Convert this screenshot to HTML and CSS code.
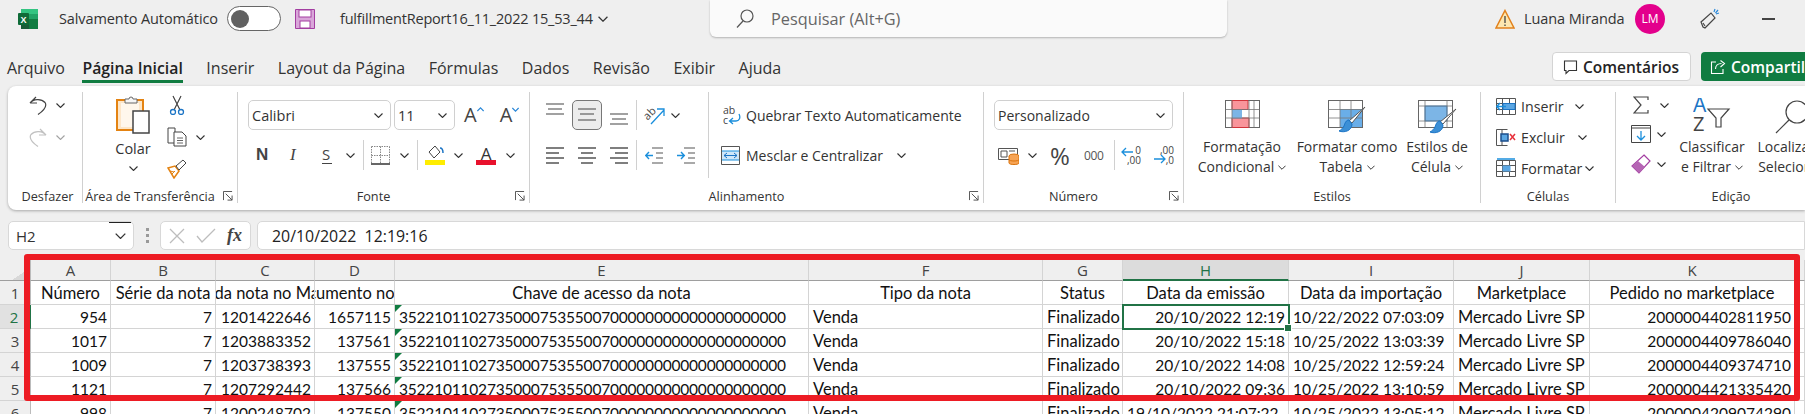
FILE: index.html
```html
<!DOCTYPE html>
<html lang="pt-BR">
<head>
    <meta charset="UTF-8">
    <meta name="viewport" content="width=device-width, initial-scale=1.0">
    <title>fulfillmentReport16_11_2022 15_53_44</title>
    <link rel="stylesheet" href="styles.css">
</head>
<body>
    <svg class="sprite" aria-hidden="true">
        <symbol id="chev" viewBox="0 0 9 5"><path d="M.5.5 4.500 4.500 8.500.5" fill="none" stroke="#333" stroke-width="1.100"/></symbol>
        <symbol id="launcher" viewBox="0 0 11 11"><path d="M.5 10V.5H10M3 3l7 7M10 5v5H5" fill="none" stroke="#555" stroke-width="1.100"/></symbol>
        <symbol id="lines-top" viewBox="0 0 18 12"><path d="M0 1h18M2 6h14M0 11h18" stroke="#444" stroke-width="1.200"/></symbol>
        <symbol id="lines-center" viewBox="0 0 18 14"><path d="M0 1h18M2 6h14M0 12h18" stroke="#444" stroke-width="1.200"/></symbol>
        <symbol id="align-left" viewBox="0 0 18 17"><path d="M0 1h18M0 6h13M0 11h18M0 16h13" stroke="#555" stroke-width="1.300"/></symbol>
        <symbol id="align-center" viewBox="0 0 18 17"><path d="M0 1h18M3 6h12M0 11h18M3 16h12" stroke="#555" stroke-width="1.300"/></symbol>
        <symbol id="align-right" viewBox="0 0 18 17"><path d="M0 1h18M5 6h13M0 11h18M5 16h13" stroke="#555" stroke-width="1.300"/></symbol>
        <symbol id="grid-frame" viewBox="0 0 20 20"><path d="M.5 2.500h19v16H.5zM.5 7.500h19M.5 13.500h19M6.500 2.500v16M13.500 2.500v16" fill="none" stroke="#555"/></symbol>
    </svg>

    <header class="title-bar">
        <svg class="logo" width="20" height="20" viewBox="0 0 20 20">
            <rect x="3" width="17" height="20" rx="1.500" fill="#21a366"/>
            <rect x="3" width="17" height="5" fill="#33c481"/>
            <rect x="11" y="10" width="9" height="10" fill="#107c41"/>
            <rect x="3" y="10" width="8" height="10" fill="#185c37"/>
            <rect y="4" width="11" height="12" rx="1" fill="#0f6b38"/>
            <text x="2.500" y="13.500" class="logo-x">X</text>
        </svg>
        <span class="title-text autosave">Salvamento Automático</span>
        <span class="toggle"><span class="knob"></span></span>
        <svg class="save" width="20" height="20" viewBox="0 0 20 20">
            <path d="M.5.5h19v19H.5z" fill="#d9a6d9" stroke="#a33ea1"/>
            <rect x="4" y="1" width="12" height="7" fill="#fff" stroke="#a33ea1"/>
            <rect x="5" y="12" width="10" height="7" fill="#fff" stroke="#a33ea1"/>
        </svg>
        <span class="title-text filename">fulfillmentReport16_11_2022 15_53_44</span>
        <svg class="chev file-chev" width="10" height="6"><use href="#chev"/></svg>
        <div class="search">
            <svg width="18" height="20" viewBox="0 0 18 20"><circle cx="11" cy="7" r="6" fill="none" stroke="#555" stroke-width="1.200"/><path d="M7 12 1 18.500" stroke="#555" stroke-width="1.200"/></svg>
            <span>Pesquisar (Alt+G)</span>
        </div>
        <svg class="warn" width="20" height="20" viewBox="0 0 20 20"><path d="M10 1.500 19 19H1z" fill="#fde7b0" stroke="#e2811c" stroke-width="1.500"/><path d="M10 7v7M10 15.500v1.500" stroke="#444" stroke-width="1.300"/></svg>
        <span class="title-text user">Luana Miranda</span>
        <span class="avatar">LM</span>
        <svg class="mega" width="21" height="22" viewBox="0 0 21 22"><path d="M2 14 12 5l4 5-8 8-2 2-2-1zM6 18l-2-3" fill="none" stroke="#444" stroke-width="1.200"/><path d="M15 4l1-3M17 6l3-1M16.500 5 19 2" stroke="#2b88d8" stroke-width="1.200"/></svg>
        <span class="minimize"></span>
    </header>

    <nav class="tabs">
        <span class="tab first">Arquivo</span>
        <span class="tab active">Página Inicial</span>
        <span class="tab">Inserir</span>
        <span class="tab">Layout da Página</span>
        <span class="tab">Fórmulas</span>
        <span class="tab">Dados</span>
        <span class="tab">Revisão</span>
        <span class="tab">Exibir</span>
        <span class="tab">Ajuda</span>
        <div class="tab-actions">
            <button class="btn-comments">
                <svg width="16" height="16" viewBox="0 0 16 16"><path d="M2.500 2h12v9.500H7L4 14.500v-3H2.500z" fill="none" stroke="#333" stroke-width="1.100"/></svg>
                Comentários
            </button>
            <button class="btn-share">
                <svg width="16" height="16" viewBox="0 0 16 16"><path d="M6 3H1.500v11.500h11.500V10M5.500 10c0-3.500 2.500-5.500 6-5.500M10.500 1.500l4 3-4 3.500" fill="none" stroke="#fff" stroke-width="1.100"/></svg>
                Compartilhar
            </button>
        </div>
    </nav>

    <section class="ribbon">
        <div class="group g-undo">
            <div class="group-body undo-body">
                <div class="row">
                    <svg width="18" height="20" viewBox="0 0 18 20"><path d="M1 8 7 2M1 8h7M1 8c3-4 11-5 15-.500 2 3 0 7-7 12" fill="none" stroke="#444" stroke-width="1.200"/></svg>
                    <svg class="chev m9" width="9" height="5"><use href="#chev"/></svg>
                </div>
                <div class="row faded">
                    <svg width="18" height="20" viewBox="0 0 18 20"><path d="M17 8l-6-6M17 8h-7M17 8C14 4 6 3 2 7.500c-2 3 0 7 7 12" fill="none" stroke="#777" stroke-width="1.200"/></svg>
                    <svg class="chev m9" width="9" height="5"><use href="#chev"/></svg>
                </div>
            </div>
            <div class="group-label"><span>Desfazer</span></div>
        </div>

        <div class="group g-clip">
            <div class="group-body clip-body">
                <div class="paste">
                    <svg width="34" height="38" viewBox="0 0 34 38">
                        <path d="M1 4h26v30H1z" fill="#fde6c8" stroke="#e48312" stroke-width="2"/>
                        <path d="M5 7h18v24H5z" fill="#fff7ec"/>
                        <path d="M9 7V3h4a2 2 0 0 1 4 0h4v4z" fill="#f6f6f6" stroke="#666"/>
                        <rect x="17" y="15" width="16" height="22" fill="#fff" stroke="#444" stroke-width="1.500"/>
                    </svg>
                    <span class="paste-label">Colar</span>
                    <svg class="chev" width="9" height="5"><use href="#chev"/></svg>
                </div>
                <div class="clip-col">
                    <div class="row">
                        <svg width="20" height="20" viewBox="0 0 20 20"><path d="M6 1l7 14M14 1 7 15" fill="none" stroke="#444" stroke-width="1.200"/><circle cx="6" cy="17" r="2.500" fill="none" stroke="#1b74c5" stroke-width="1.300"/><circle cx="14" cy="17" r="2.500" fill="none" stroke="#1b74c5" stroke-width="1.300"/></svg>
                    </div>
                    <div class="row">
                        <svg width="20" height="20" viewBox="0 0 20 20"><path d="M1 1h7v15H1z" fill="#fff" stroke="#444"/><path d="M7 5h8l4 4v10H7z" fill="#fff" stroke="#444"/><path d="M10 11h6M10 13.500h6M10 16h6" stroke="#666"/></svg>
                        <svg class="chev m9" width="9" height="5"><use href="#chev"/></svg>
                    </div>
                    <div class="row">
                        <svg width="20" height="20" viewBox="0 0 20 20"><path d="M1 9l7-2 4 5-5 7z" fill="#fff" stroke="#e48312" stroke-width="1.500"/><path d="M3 12l4 1M5 15l3-3" stroke="#e48312"/><path d="M9 7l3 4 7-7-3-3z" fill="#fff" stroke="#444"/></svg>
                    </div>
                </div>
            </div>
            <div class="group-label has-launcher"><span>Área de Transferência</span><svg width="10" height="10"><use href="#launcher"/></svg></div>
        </div>

        <div class="group g-font">
            <div class="group-body stacked">
                <div class="row row-30 pad-10">
                    <div class="select font-name"><span>Calibri</span><svg class="chev" width="9" height="5"><use href="#chev"/></svg></div>
                    <div class="select font-size m3"><span>11</span><svg class="chev" width="9" height="5"><use href="#chev"/></svg></div>
                    <span class="grow m9">A<svg width="7" height="5" viewBox="0 0 9 5"><path d="M.5 4.500 4.500.5 8.500 4.500" fill="none" stroke="#2b88d8" stroke-width="1.500"/></svg></span>
                    <span class="shrink m16">A<svg width="7" height="5" viewBox="0 0 9 5"><path d="M.5.5 4.500 4.500 8.500.5" fill="none" stroke="#2b88d8" stroke-width="1.500"/></svg></span>
                </div>
                <div class="row row-30">
                    <span class="fmt fmt-bold m18">N</span>
                    <span class="fmt fmt-italic m21">I</span>
                    <span class="fmt fmt-under m24">S</span>
                    <svg class="chev m14" width="9" height="5"><use href="#chev"/></svg>
                    <span class="vsep m8"></span>
                    <svg class="m7" width="19" height="19" viewBox="0 0 19 19"><path d="M.5.5h18M.5 9.500h18M9.500.5v17M.5.5v17M18.500.5v17" fill="none" stroke="#888" stroke-dasharray="1.500 1"/><path d="M0 18h19" stroke="#333" stroke-width="1.500"/></svg>
                    <svg class="chev m10" width="9" height="5"><use href="#chev"/></svg>
                    <span class="vsep m8"></span>
                    <svg class="m7" width="20" height="20" viewBox="0 0 20 20"><path d="M4 7 10 1l5 6-6 6z" fill="#fff" stroke="#444"/><path d="M15 3c2 0 3 2 3 5" fill="none" stroke="#1b74c5" stroke-width="1.500"/><rect y="15" width="20" height="5" fill="#ffed00"/></svg>
                    <svg class="chev m9" width="9" height="5"><use href="#chev"/></svg>
                    <span class="font-color m13">A</span>
                    <svg class="chev m10" width="9" height="5"><use href="#chev"/></svg>
                </div>
            </div>
            <div class="group-label has-launcher"><span>Fonte</span><svg width="10" height="10"><use href="#launcher"/></svg></div>
        </div>

        <div class="group g-align">
            <div class="group-body align-body">
                <div class="align-left stacked">
                    <div class="row row-30">
                        <svg class="m16 up-6" width="18" height="12"><use href="#lines-top"/></svg>
                        <span class="active-btn m8"><svg width="18" height="14"><use href="#lines-center"/></svg></span>
                        <svg class="m8 down-8" width="18" height="12"><use href="#lines-top"/></svg>
                        <span class="vsep m8"></span>
                        <svg class="m7" width="21" height="20" viewBox="0 0 21 20"><text x="0" y="13" class="orient" transform="rotate(-45 5 10)">ab</text><path d="M7 19 20 5M13 4h7v7" fill="none" stroke="#1b8fdc" stroke-width="1.300"/></svg>
                        <svg class="chev m6" width="9" height="5"><use href="#chev"/></svg>
                    </div>
                    <div class="row row-30">
                        <svg class="m16" width="18" height="17"><use href="#align-left"/></svg>
                        <svg class="m14" width="18" height="17"><use href="#align-center"/></svg>
                        <svg class="m14" width="18" height="17"><use href="#align-right"/></svg>
                        <span class="vsep m8"></span>
                        <svg class="m8" width="18" height="17" viewBox="0 0 18 17"><path d="M7 1h11M11 6h7M11 11h7M7 16h11" fill="none" stroke="#555" stroke-width="1.200"/><path d="M8 8.500H1M4 5 .7 8.500 4 12" fill="none" stroke="#1b8fdc" stroke-width="1.400"/></svg>
                        <svg class="m14" width="18" height="17" viewBox="0 0 18 17"><path d="M7 1h11M11 6h7M11 11h7M7 16h11" fill="none" stroke="#555" stroke-width="1.200"/><path d="M0 8.500h7M4 5l3.300 3.500L4 12" fill="none" stroke="#1b8fdc" stroke-width="1.400"/></svg>
                    </div>
                </div>
                <div class="align-right stacked">
                    <div class="row row-30 pad-14">
                        <svg width="18" height="20" viewBox="0 0 18 20"><text x="0" y="9" class="mini">ab</text><text x="0" y="19" class="mini">c</text><path d="M16 9c2 4 0 7-3 7H7M10 13l-3.500 3 3.500 3" fill="none" stroke="#1b8fdc" stroke-width="1.300"/></svg>
                        <span class="label m5">Quebrar Texto Automaticamente</span>
                    </div>
                    <div class="row row-30 pad-12">
                        <svg width="19" height="19" viewBox="0 0 19 19"><path d="M.5.5h18v18H.5z" fill="#fff" stroke="#555"/><rect x="1" y="5" width="17" height="9" fill="#cfe6f8"/><path d="M1 5h17M1 14h17" stroke="#1b8fdc"/><path d="M3 9.500h13M6 7 3 9.500 6 12M13 7l3 2.500L13 12" fill="none" stroke="#1b74c5"/></svg>
                        <span class="label m6">Mesclar e Centralizar</span>
                        <svg class="chev m14" width="9" height="5"><use href="#chev"/></svg>
                    </div>
                </div>
            </div>
            <div class="group-label has-launcher"><span>Alinhamento</span><svg width="10" height="10"><use href="#launcher"/></svg></div>
        </div>

        <div class="group g-number">
            <div class="group-body stacked">
                <div class="row row-30 pad-10">
                    <div class="select number-format"><span>Personalizado</span><svg class="chev" width="9" height="5"><use href="#chev"/></svg></div>
                </div>
                <div class="row row-30">
                    <svg class="m14" width="21" height="20" viewBox="0 0 21 20"><path d="M.5 3.500h19v11H.5z" fill="#fff" stroke="#555"/><path d="M3 6h6v6H3zM11 6h6" fill="none" stroke="#555"/><ellipse cx="16" cy="11" rx="5" ry="2" fill="#f7a455" stroke="#d9730d"/><path d="M11 11v7c0 2 10 2 10 0v-7" fill="#f7a455" stroke="#d9730d"/><path d="M11 14.500c0 2 10 2 10 0" fill="none" stroke="#d9730d"/></svg>
                    <svg class="chev m9" width="9" height="5"><use href="#chev"/></svg>
                    <span class="percent m13">%</span>
                    <span class="thousands m12">000</span>
                    <span class="vsep m8"></span>
                    <span class="decimals m6"><svg width="12" height="18" viewBox="0 0 12 18"><path d="M12 6H1M5 2 1 6l4 4" fill="none" stroke="#1b8fdc" stroke-width="1.300"/></svg><span class="dec-nums"><i>0</i><i>,00</i></span></span>
                    <span class="decimals m14"><svg width="12" height="18" viewBox="0 0 12 18"><path d="M0 13h11M7 9l4 4-4 4" fill="none" stroke="#1b8fdc" stroke-width="1.300"/></svg><span class="dec-nums"><i>,00</i><i>,0</i></span></span>
                </div>
            </div>
            <div class="group-label has-launcher"><span>Número</span><svg width="10" height="10"><use href="#launcher"/></svg></div>
        </div>

        <div class="group g-styles">
            <div class="group-body styles-body">
                <div class="big-btn w100">
                    <div class="big-icon">
                        <svg width="35" height="28" viewBox="0 0 35 28">
                            <rect x=".5" y=".5" width="34" height="27" fill="#fff" stroke="#666"/>
                            <path d="M7 .5h16v9H7zM7 18h17v9.500H7z" fill="#f9959b" stroke="#d1343b"/>
                            <rect x="7" y="9.500" width="10" height="9" fill="#7cb5e6"/>
                            <path d="M.5 9.500h34M.5 18h34M7 .5v27M24 .5v27M29 .5v27" fill="none" stroke="#777" stroke-width=".8"/>
                        </svg>
                    </div>
                    <span>Formatação</span>
                    <span>Condicional <svg class="chev" width="8" height="5"><use href="#chev"/></svg></span>
                </div>
                <div class="big-btn w110">
                    <div class="big-icon">
                        <svg width="38" height="34" viewBox="0 0 38 34">
                            <rect x=".5" y=".5" width="34" height="27" fill="#fff" stroke="#666"/>
                            <rect x="12" y="9" width="22" height="18" fill="#6aaee8"/>
                            <path d="M.5 9.500h34M.5 18h34M12 .5v27M23 .5v27" fill="none" stroke="#777" stroke-width=".8"/>
                            <path d="M37 7 24 23l-3-2z" fill="#fff" stroke="#555"/>
                            <path d="M21 20c-3 0-4 3-5 6-1 2-3 4-5 5 5 2 13 0 13-7z" fill="#3b8fd6" stroke="#1b74c5"/>
                        </svg>
                    </div>
                    <span>Formatar como</span>
                    <span>Tabela <svg class="chev" width="8" height="5"><use href="#chev"/></svg></span>
                </div>
                <div class="big-btn w70">
                    <div class="big-icon">
                        <svg width="39" height="35" viewBox="0 0 39 35">
                            <rect x=".5" y=".5" width="34" height="27" fill="#fff" stroke="#666"/>
                            <rect x="7" y="6" width="22" height="15" fill="#7cb5e6" stroke="#1b74c5" stroke-width=".8"/>
                            <path d="M.5 6h34M.5 21h34M7 .5v27M29 .5v27" fill="none" stroke="#777" stroke-width=".8"/>
                            <path d="M38 9 25 24l-3-2z" fill="#fff" stroke="#555"/>
                            <path d="M22 21c-3 0-4 3-5 6-1 2-3 4-5 5 5 2 13 0 13-7z" fill="#3b8fd6" stroke="#1b74c5"/>
                        </svg>
                    </div>
                    <span>Estilos de</span>
                    <span>Célula <svg class="chev" width="8" height="5"><use href="#chev"/></svg></span>
                </div>
            </div>
            <div class="group-label"><span>Estilos</span></div>
        </div>

        <div class="group g-cells">
            <div class="group-body cells-body">
                <div class="row">
                    <svg width="20" height="20" viewBox="0 0 20 20"><use href="#grid-frame"/><rect x="7" y="7.500" width="12" height="6" fill="#5ba6e2" stroke="#1b74c5"/><path d="M10 10.500H1M4 7 .8 10.500 4 14" fill="none" stroke="#1b8fdc" stroke-width="1.400"/></svg>
                    <span class="label cell-label">Inserir</span>
                    <svg class="chev" width="9" height="5"><use href="#chev"/></svg>
                </div>
                <div class="row">
                    <svg width="20" height="20" viewBox="0 0 20 20"><path d="M.5 2.500h11M.5 18.500h11M.5 2.500v16M6 2.500v5M6 13.500v5" fill="none" stroke="#555"/><rect x="5" y="7" width="7" height="7" fill="#5ba6e2" stroke="#1b4e8c" stroke-width="1.500"/><path d="M14 7l5 6M19 7l-5 6" stroke="#e8303a" stroke-width="1.500"/></svg>
                    <span class="label cell-label mid">Excluir</span>
                    <svg class="chev" width="9" height="5"><use href="#chev"/></svg>
                </div>
                <div class="row">
                    <svg width="20" height="20" viewBox="0 0 20 20"><use href="#grid-frame"/><rect x="6.500" y="7.500" width="8" height="6" fill="#5ba6e2"/><path d="M1 1h18" stroke="#1b8fdc" stroke-width="1.300"/></svg>
                    <span class="label cell-label wide">Formatar</span>
                    <svg class="chev" width="9" height="5"><use href="#chev"/></svg>
                </div>
            </div>
            <div class="group-label"><span>Células</span></div>
        </div>

        <div class="group g-edit">
            <div class="group-body edit-body">
                <div class="edit-col">
                    <div class="row">
                        <svg class="m2" width="16" height="18" viewBox="0 0 16 18"><path d="M15 4V1H1l7 8-7 8h14v-3" fill="none" stroke="#444" stroke-width="1.200"/></svg>
                        <svg class="chev m11" width="9" height="5"><use href="#chev"/></svg>
                    </div>
                    <div class="row">
                        <svg width="20" height="18" viewBox="0 0 20 18"><path d="M.5.5h19v17H.5z" fill="#fff" stroke="#444"/><path d="M1 3h18" stroke="#444"/><path d="M10 6v9M6 11l4 4 4-4" fill="none" stroke="#1b8fdc" stroke-width="1.300"/></svg>
                        <svg class="chev m6" width="9" height="5"><use href="#chev"/></svg>
                    </div>
                    <div class="row">
                        <svg width="20" height="20" viewBox="0 0 20 20"><path d="M13 1l6 6-11 12-7-7z" fill="#fff" stroke="#a33ea1" stroke-width="1.200"/><path d="M7 7l7 6-6 6-7-7z" fill="#b565b4"/></svg>
                        <svg class="chev m6" width="9" height="5"><use href="#chev"/></svg>
                    </div>
                </div>
                <div class="big-btn w70">
                    <div class="big-icon sort-icon">
                        <svg width="38" height="34" viewBox="0 0 38 34">
                            <text x="0" y="14" class="sort-a">A</text>
                            <text x="0" y="33" class="sort-z">Z</text>
                            <path d="M15 11h21l-8 9v9h-5v-9z" fill="#fff" stroke="#444" stroke-width="1.200"/>
                        </svg>
                    </div>
                    <span>Classificar</span>
                    <span>e Filtrar <svg class="chev" width="8" height="5"><use href="#chev"/></svg></span>
                </div>
                <div class="big-btn w74">
                    <div class="big-icon">
                        <svg width="34" height="34" viewBox="0 0 34 34"><circle cx="22" cy="12" r="11" fill="#fff" stroke="#444" stroke-width="1.200"/><path d="M14 20 1 33" stroke="#444" stroke-width="1.200"/></svg>
                    </div>
                    <span>Localizar e</span>
                    <span>Selecionar</span>
                </div>
            </div>
            <div class="group-label"><span>Edição</span></div>
        </div>
    </section>

    <div class="formula-bar">
        <div class="name-box"><span>H2</span><span class="name-arrow"><svg class="chev" width="11" height="6"><use href="#chev"/></svg></span></div>
        <span class="dots"><i></i><i></i><i></i></span>
        <div class="fx-box">
            <svg width="16" height="16" viewBox="0 0 16 16"><path d="M1 1l14 14M15 1 1 15" stroke="#bdbdbd" stroke-width="1.300"/></svg>
            <svg width="20" height="15" viewBox="0 0 20 15"><path d="M1 8l5 6L19 1" fill="none" stroke="#bdbdbd" stroke-width="1.300"/></svg>
            <span class="fx">fx</span>
        </div>
        <div class="formula-input">20/10/2022&nbsp; 12:19:16</div>
    </div>

    <div class="sheet-wrap">
        <div class="sheet">
            <div class="corner"></div>
            <div class="col-head">A</div><div class="col-head">B</div><div class="col-head">C</div><div class="col-head">D</div><div class="col-head">E</div><div class="col-head">F</div><div class="col-head">G</div><div class="col-head selected">H</div><div class="col-head">I</div><div class="col-head">J</div><div class="col-head">K</div><div class="col-head"></div>

            <div class="row-head">1</div>
            <div class="cell c">Número</div><div class="cell c">Série da nota</div><div class="cell c">Id da nota no Mark</div><div class="cell c">Documento no ML</div><div class="cell c">Chave de acesso da nota</div><div class="cell c">Tipo da nota</div><div class="cell c">Status</div><div class="cell c">Data da emissão</div><div class="cell c">Data da importação</div><div class="cell c">Marketplace</div><div class="cell c">Pedido no marketplace</div><div class="cell"></div>

            <div class="row-head selected">2</div>
            <div class="cell r">954</div><div class="cell r">7</div><div class="cell r">1201422646</div><div class="cell r">1657115</div><div class="cell key">35221011027350007535500700000000000000000000</div><div class="cell">Venda</div><div class="cell">Finalizado</div><div class="cell r active-cell">20/10/2022 12:19<span class="handle"></span></div><div class="cell d">10/22/2022 07:03:09</div><div class="cell">Mercado Livre SP</div><div class="cell r">2000004402811950</div><div class="cell"></div>

            <div class="row-head">3</div>
            <div class="cell r">1017</div><div class="cell r">7</div><div class="cell r">1203883352</div><div class="cell r">137561</div><div class="cell key">35221011027350007535500700000000000000000000</div><div class="cell">Venda</div><div class="cell">Finalizado</div><div class="cell r">20/10/2022 15:18</div><div class="cell d">10/25/2022 13:03:39</div><div class="cell">Mercado Livre SP</div><div class="cell r">2000004409786040</div><div class="cell"></div>

            <div class="row-head">4</div>
            <div class="cell r">1009</div><div class="cell r">7</div><div class="cell r">1203738393</div><div class="cell r">137555</div><div class="cell key">35221011027350007535500700000000000000000000</div><div class="cell">Venda</div><div class="cell">Finalizado</div><div class="cell r">20/10/2022 14:08</div><div class="cell d">10/25/2022 12:59:24</div><div class="cell">Mercado Livre SP</div><div class="cell r">2000004409374710</div><div class="cell"></div>

            <div class="row-head">5</div>
            <div class="cell r">1121</div><div class="cell r">7</div><div class="cell r">1207292442</div><div class="cell r">137566</div><div class="cell key">35221011027350007535500700000000000000000000</div><div class="cell">Venda</div><div class="cell">Finalizado</div><div class="cell r">20/10/2022 09:36</div><div class="cell d">10/25/2022 13:10:59</div><div class="cell">Mercado Livre SP</div><div class="cell r">2000004421335420</div><div class="cell"></div>

            <div class="row-head">6</div>
            <div class="cell r">998</div><div class="cell r">7</div><div class="cell r">1200248702</div><div class="cell r">137550</div><div class="cell key">35221011027350007535500700000000000000000000</div><div class="cell">Venda</div><div class="cell">Finalizado</div><div class="cell d">19/10/2022 21:07:22</div><div class="cell d">10/25/2022 13:05:12</div><div class="cell">Mercado Livre SP</div><div class="cell r">2000004209074290</div><div class="cell"></div>
        </div>
        <div class="highlight"></div>
    </div>
</body>
</html>
```

FILE: styles.css
```css
html, body {
    margin: 0;
    height: 414px;
    overflow: hidden;
}

body {
    width: 1805px;
    background: #efefef;
    color: #333;
    font-family: "Open Sans", "Noto Sans", sans-serif;
    font-size: 14px;
}

svg {
    display: block;
    flex-shrink: 0;
}

.sprite {
    position: absolute;
    width: 0;
    height: 0;
}

/* spacing helpers for the icon rows */
.m2 { margin-left: 2px; }
.m3 { margin-left: 3px; }
.m5 { margin-left: 5px; }
.m6 { margin-left: 6px; }
.m7 { margin-left: 7px; }
.m8 { margin-left: 8px; }
.m9 { margin-left: 9px; }
.m10 { margin-left: 10px; }
.m11 { margin-left: 11px; }
.m12 { margin-left: 12px; }
.m13 { margin-left: 13px; }
.m14 { margin-left: 14px; }
.m16 { margin-left: 16px; }
.m18 { margin-left: 18px; }
.m21 { margin-left: 21px; }
.m24 { margin-left: 24px; }

/* title bar */
.title-bar {
    display: flex;
    align-items: center;
    height: 37px;
}

.logo { margin-left: 18px; }

.logo-x {
    font: bold 9px "Liberation Sans", sans-serif;
    fill: #fff;
}

.title-text {
    font-size: 14.500px;
    white-space: nowrap;
    letter-spacing: -0.1px;
}

.autosave {
    width: 160px;
    margin-left: 21px;
}

.toggle {
    display: flex;
    align-items: center;
    box-sizing: border-box;
    width: 54px;
    height: 25px;
    margin-left: 8px;
    padding-left: 3px;
    background: #fff;
    border: 1px solid #666;
    border-radius: 13px;
}

.knob {
    width: 18px;
    height: 18px;
    background: #616161;
    border-radius: 50%;
}

.save { margin-left: 14px; }

.filename {
    width: 254px;
    margin-left: 25px;
    letter-spacing: -0.2px;
}

.file-chev { margin-left: 4px; }

.search {
    display: flex;
    align-items: center;
    box-sizing: border-box;
    width: 517px;
    height: 37px;
    margin-left: 102px;
    padding-left: 26px;
    background: #fafafa;
    border-radius: 0 0 6px 6px;
    box-shadow: 0 1px 2px rgba(0, 0, 0, 0.25);
    color: #666;
    font-size: 16.300px;
}

.search span { margin-left: 17px; }

.warn { margin-left: 268px; }

.user {
    width: 98px;
    margin-left: 9px;
}

.avatar {
    display: flex;
    justify-content: center;
    align-items: center;
    width: 30px;
    height: 30px;
    margin-left: 13px;
    background: #e3008c;
    border-radius: 50%;
    color: #fff;
    font-size: 12px;
}

.mega { margin-left: 34px; }

.minimize {
    width: 13px;
    height: 2px;
    margin-left: 42px;
    background: #444;
}

/* tabs */
.tabs {
    display: flex;
    gap: 23.500px;
    width: 1805px;
    height: 34px;
    margin-top: 15px;
    font-size: 16px;
    overflow: hidden;
}

.tab {
    height: 31px;
    line-height: 32px;
    white-space: nowrap;
}

.tab.first {
    margin-left: 7px;
    margin-right: -6px;
}

.tab.active {
    font-size: 15.800px;
    font-weight: 600;
    box-shadow: inset 0 -3px 0 #107c41;
    color: #222;
}

.tab-actions {
    display: flex;
    flex-shrink: 0;
    gap: 10px;
    width: 253px;
    margin-left: auto;
    height: 29px;
}

.tab-actions button {
    display: flex;
    align-items: center;
    flex-shrink: 0;
    gap: 5px;
    box-sizing: border-box;
    height: 29px;
    padding: 0 9px;
    border-radius: 4px;
    font: 600 15.500px "Open Sans", sans-serif;
    white-space: nowrap;
}

.btn-comments {
    width: 139px;
    background: #fff;
    border: 1px solid #d4d4d4;
    color: #242424;
}

.btn-share {
    width: 135px;
    background: #107c41;
    border: 0;
    color: #fff;
}

/* ribbon */
.ribbon {
    display: flex;
    box-sizing: border-box;
    width: 1797px;
    height: 124px;
    margin-left: 8px;
    padding: 6px 0 7px;
    background: #fff;
    border-radius: 8px 0 0 8px;
    box-shadow: 0 1px 3px rgba(0, 0, 0, 0.3);
    overflow: hidden;
}

.group {
    display: flex;
    flex-direction: column;
    flex-shrink: 0;
    box-sizing: border-box;
    border-right: 1px solid #d0d0d0;
}

.g-undo { width: 75px; }
.g-clip { width: 155px; }
.g-font { width: 292px; }
.g-align { width: 454px; }
.g-number { width: 200px; }
.g-styles { width: 297px; }
.g-cells { width: 135px; }
.g-edit { width: 230px; border-right: 0; }

.group-body {
    flex: 1;
    min-height: 0;
}

.group-label {
    display: flex;
    justify-content: center;
    align-items: center;
    height: 12px;
    padding-bottom: 1px;
    font-size: 12.700px;
    line-height: 14px;
    white-space: nowrap;
}

.has-launcher span {
    flex: 1;
    padding-right: 6px;
    text-align: center;
}

.has-launcher svg { margin-right: 4px; }

.g-undo .group-label { padding-left: 5px; }

.row {
    display: flex;
    align-items: center;
}

.row-30 { height: 30px; }
.pad-10 { padding-left: 10px; }
.pad-12 { padding-left: 12px; }
.pad-14 { padding-left: 14px; }

.stacked {
    display: flex;
    flex-direction: column;
    gap: 10px;
    padding-top: 8px;
}

.label {
    font-size: 14px;
    white-space: nowrap;
}

.vsep {
    width: 1px;
    height: 30px;
    background: #d0d0d0;
}

.undo-body {
    display: flex;
    flex-direction: column;
    gap: 12px;
    padding: 3px 0 0 21px;
}

.faded { opacity: 0.45; }

.clip-body {
    display: flex;
    padding: 4px 0 0 30px;
}

.paste {
    display: flex;
    flex-direction: column;
    align-items: center;
    width: 40px;
}

.paste-label {
    margin: 5px 0 7px;
    line-height: 20px;
    font-size: 14.500px;
}

.clip-col {
    display: flex;
    flex-direction: column;
    gap: 12px;
    margin: -1px 0 0 14px;
}

.select {
    display: flex;
    justify-content: space-between;
    align-items: center;
    box-sizing: border-box;
    height: 30px;
    padding: 0 7px 0 3px;
    border: 1px solid #d0d0d0;
    border-radius: 5px;
    background: #fff;
    font-size: 14.500px;
}

.font-name { width: 143px; }
.font-size { width: 61px; }

.number-format {
    width: 179px;
    font-size: 14px;
}

.grow, .shrink {
    display: flex;
    align-items: flex-start;
    font-size: 20px;
    line-height: 24px;
    color: #444;
}

.grow svg, .shrink svg { margin-top: 4px; }

.fmt {
    color: #444;
    line-height: 20px;
}

.fmt-bold {
    width: 13px;
    font: bold 17px/20px "Liberation Sans", sans-serif;
}

.fmt-italic {
    width: 8px;
    font: italic 17px/20px "Liberation Serif", serif;
}

.fmt-under {
    width: 10px;
    font-size: 15px;
    border-bottom: 1.500px solid #444;
    line-height: 17px;
}

.font-color {
    width: 20px;
    height: 20px;
    box-sizing: border-box;
    border-bottom: 5px solid #e8112d;
    font-size: 17px;
    line-height: 17px;
    text-align: center;
}

.up-6 { margin-top: -12px; }
.down-8 { margin-top: 8px; }

.active-btn {
    display: flex;
    justify-content: center;
    align-items: center;
    box-sizing: border-box;
    width: 30px;
    height: 30px;
    background: #ececec;
    border: 1px solid #777;
    border-radius: 5px;
}

.orient {
    font: 11px "Open Sans", sans-serif;
    fill: #444;
}

.mini {
    font: 10.500px "Open Sans", sans-serif;
    fill: #444;
}

.align-body { display: flex; }

.align-left {
    box-sizing: border-box;
    width: 179px;
    height: 86px;
    border-right: 1px solid #d0d0d0;
}

.percent {
    width: 22px;
    font-size: 24px;
    color: #444;
}

.thousands {
    width: 22px;
    font-size: 12px;
    letter-spacing: -0.3px;
    color: #555;
}

.decimals {
    display: flex;
    align-items: center;
    width: 19px;
}

.dec-nums {
    display: flex;
    flex-direction: column;
    align-items: flex-end;
    margin-left: -6px;
    font-size: 10px;
    line-height: 10px;
    color: #444;
}

.dec-nums i { font-style: normal; }

.styles-body {
    display: flex;
    padding-left: 8px;
}

.big-btn {
    display: flex;
    flex-direction: column;
    align-items: center;
    font-size: 14px;
    line-height: 20px;
    white-space: nowrap;
}

.big-btn span {
    display: flex;
    align-items: center;
    gap: 4px;
}

.w70 { width: 70px; }
.w74 { width: 74px; }
.w100 { width: 100px; }
.w110 { width: 110px; }

.big-icon {
    height: 35px;
    margin: 8px 0 2px;
}

.sort-a {
    font: 21px "Open Sans", sans-serif;
    fill: #1b74c5;
}

.sort-z {
    font: 20px "Open Sans", sans-serif;
    fill: #444;
}

.sort-icon { margin: 6px 0 4px; }

.cells-body,
.edit-col {
    display: flex;
    flex-direction: column;
    gap: 11px;
    padding: 4px 0 0 15px;
}

.cell-label {
    width: 54px;
    margin-left: 5px;
    font-size: 14.200px;
}

.cell-label.mid { width: 57px; }
.cell-label.wide { width: 64px; }

.edit-body { display: flex; }

.edit-col {
    box-sizing: border-box;
    width: 61px;
}

.edit-body .big-btn + .big-btn { margin-left: 8px; }

/* formula bar */
.formula-bar {
    display: flex;
    align-items: center;
    height: 29px;
    margin-top: 11px;
}

.name-box,
.fx-box,
.formula-input {
    display: flex;
    align-items: center;
    box-sizing: border-box;
    height: 29px;
    background: #fff;
    border: 1px solid #d8d8d8;
    border-radius: 5px;
}

.name-box {
    justify-content: space-between;
    width: 126px;
    margin-left: 8px;
    padding-left: 7px;
    font-size: 15px;
}

.name-arrow {
    display: flex;
    justify-content: center;
    align-items: center;
    width: 22px;
    height: 100%;
    margin-right: 2px;
    box-sizing: border-box;
    border-top: 1px solid #222;
}

.dots {
    display: flex;
    flex-direction: column;
    gap: 3px;
    width: 26px;
    align-items: center;
}

.dots i {
    width: 3px;
    height: 3px;
    background: #999;
}

.fx-box {
    gap: 11px;
    width: 91px;
    padding-left: 8px;
}

.fx {
    font: italic bold 18px "Liberation Serif", serif;
    color: #444;
}

.formula-input {
    flex: 1;
    margin-left: 6px;
    padding-left: 14px;
    border-radius: 5px 0 0 5px;
    font-size: 15.900px;
    color: #222;
}

/* sheet */
.sheet-wrap {
    position: relative;
    margin-top: 10px;
}

.sheet {
    display: grid;
    grid-template-columns: 31px 80px 105px 99px 80px 414px 234px 80px 166px 165px 136px 205px 10px;
    grid-template-rows: 21px repeat(6, 24px);
    font-family: "Lato", "Liberation Sans", sans-serif;
    font-size: 16.500px;
    color: #111;
}

.corner {
    background: linear-gradient(to top left, #d8d8d8 0 30%, #efefef 30%);
    border-right: 1px solid #bbb;
    border-bottom: 1px solid #9e9e9e;
}

.col-head,
.row-head {
    display: flex;
    justify-content: center;
    align-items: center;
    box-sizing: border-box;
    background: #efefef;
    color: #444;
    font-family: "Open Sans", sans-serif;
    font-size: 15px;
}

.col-head {
    border-right: 1px solid #d4d4d4;
    border-bottom: 1px solid #9e9e9e;
}

.col-head.selected {
    background: #dcdcdc;
    border-bottom: 2px solid #217346;
    color: #217346;
}

.row-head {
    border-right: 1px solid #bbb;
    border-bottom: 1px solid #d4d4d4;
}

.row-head.selected {
    background: #e1e1e1;
    border-right: 3px solid #217346;
    color: #217346;
}

.cell {
    display: flex;
    align-items: center;
    position: relative;
    box-sizing: border-box;
    padding: 1px 3px 0 4px;
    background: #fff;
    border-right: 1px solid #d4d4d4;
    border-bottom: 1px solid #d4d4d4;
    white-space: nowrap;
    overflow: hidden;
}

.cell.c { justify-content: center; padding-left: 0; padding-right: 0; }
.cell.r { justify-content: flex-end; }

/* digits run wider than Calibri's, letters narrower, so they get separate sizes */
.cell.r,
.cell.d,
.cell.key { font-size: 15.500px; }

.cell.key { letter-spacing: -0.2px; }

.key::before {
    content: "";
    position: absolute;
    top: 0;
    left: 0;
    border-top: 7px solid #107c41;
    border-right: 7px solid transparent;
}

.active-cell {
    outline: 2px solid #217346;
    outline-offset: -1px;
    overflow: visible;
    z-index: 1;
}

.handle {
    position: absolute;
    right: -4px;
    bottom: -4px;
    width: 6px;
    height: 6px;
    background: #217346;
    border: 1px solid #fff;
}

.highlight {
    position: absolute;
    top: -6px;
    left: 24px;
    z-index: 2;
    box-sizing: border-box;
    width: 1776px;
    height: 147px;
    border: 6.500px solid #ed1c24;
    border-radius: 3px;
}
```
